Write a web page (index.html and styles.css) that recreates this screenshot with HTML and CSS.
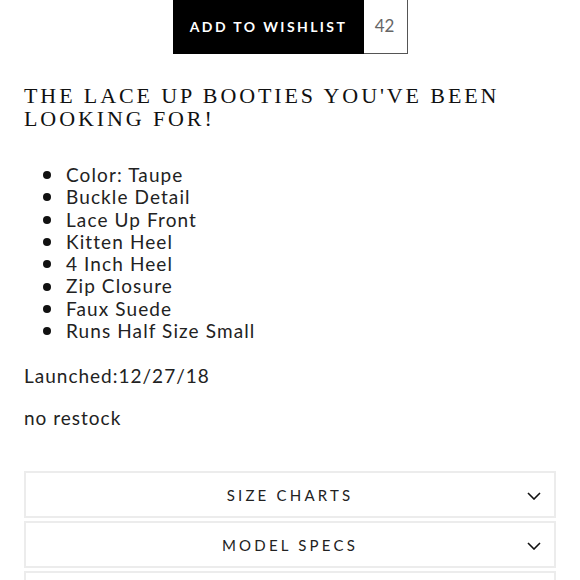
FILE: index.html
```html
<!DOCTYPE html>
<html>
<head>
<meta charset="utf-8">
<link rel="stylesheet" href="styles.css">
</head>
<body>
<div class="page">
  <div class="wish">
    <button class="wish-btn">ADD TO WISHLIST</button>
    <span class="wish-count">42</span>
  </div>
  <h1 class="title">THE LACE UP BOOTIES YOU'VE BEEN LOOKING FOR!</h1>
  <ul class="features">
    <li>Color: Taupe</li>
    <li>Buckle Detail</li>
    <li>Lace Up Front</li>
    <li>Kitten Heel</li>
    <li>4 Inch Heel</li>
    <li>Zip Closure</li>
    <li>Faux Suede</li>
    <li>Runs Half Size Small</li>
  </ul>
  <p class="note">Launched:12/27/18</p>
  <p class="note">no restock</p>
  <div class="accordion">
    <div class="acc-item">
      <span class="acc-title">SIZE CHARTS</span>
      <svg class="chev" width="14" height="8" viewBox="0 0 14 8"><path d="M1 1 L7 7 L13 1" fill="none" stroke="#111" stroke-width="1.6"/></svg>
    </div>
    <div class="acc-item">
      <span class="acc-title">MODEL SPECS</span>
      <svg class="chev" width="14" height="8" viewBox="0 0 14 8"><path d="M1 1 L7 7 L13 1" fill="none" stroke="#111" stroke-width="1.6"/></svg>
    </div>
    <div class="acc-item acc-last"></div>
  </div>
</div>
</body>
</html>
```
FILE: styles.css
```css
html, body {
  margin: 0;
  padding: 0;
  background: #fff;
  overflow: hidden;
}
.page {
  padding: 0 24px 0 24px;
  font-family: Lato, "Liberation Sans", sans-serif;
  color: #222;
}
.wish {
  display: flex;
  justify-content: center;
  height: 54px;
  padding-left: 1px;
}
.wish-btn {
  width: 191px;
  height: 54px;
  background: #000;
  color: #fff;
  border: 0;
  font-family: Lato, sans-serif;
  font-weight: 700;
  font-size: 14px;
  letter-spacing: 2.4px;
  padding: 0 0 2px 0;
}
.wish-count {
  width: 44px;
  height: 54px;
  box-sizing: border-box;
  border: 1px solid #555;
  border-top: 0;
  border-left: 0;
  display: flex;
  align-items: center;
  justify-content: center;
  font-size: 17px;
  color: #666;
  padding: 0 2px 2px 0;
}
.title {
  margin: 30px 0 0 0;
  font-family: "Liberation Serif", serif;
  font-weight: 400;
  font-size: 22px;
  line-height: 23px;
  letter-spacing: 2.9px;
  color: #111;
}
.features {
  list-style: none;
  margin: 34px 0 0 0;
  padding: 0;
  font-size: 19px;
  line-height: 22.3px;
  letter-spacing: 1.1px;
}
.features li {
  display: flex;
  align-items: center;
  gap: 15px;
  padding-left: 19px;
}
.features li::before {
  content: "";
  width: 8px;
  height: 8px;
  border-radius: 50%;
  background: #111;
  flex: none;
}
.note {
  margin: 23px 0 0 0;
  font-size: 19px;
  line-height: 22px;
  letter-spacing: 1px;
}
.note + .note {
  margin-top: 20px;
}
.accordion {
  margin-top: 42px;
  display: flex;
  flex-direction: column;
  gap: 3px;
}
.acc-item {
  height: 47px;
  box-sizing: border-box;
  border: 2px solid #ececec;
  display: flex;
  align-items: center;
  justify-content: center;
  position: relative;
}
.acc-title {
  font-size: 15px;
  letter-spacing: 3.2px;
  color: #222;
  padding-top: 1px;
}
.chev {
  position: absolute;
  right: 13px;
  top: 19px;
}
```
